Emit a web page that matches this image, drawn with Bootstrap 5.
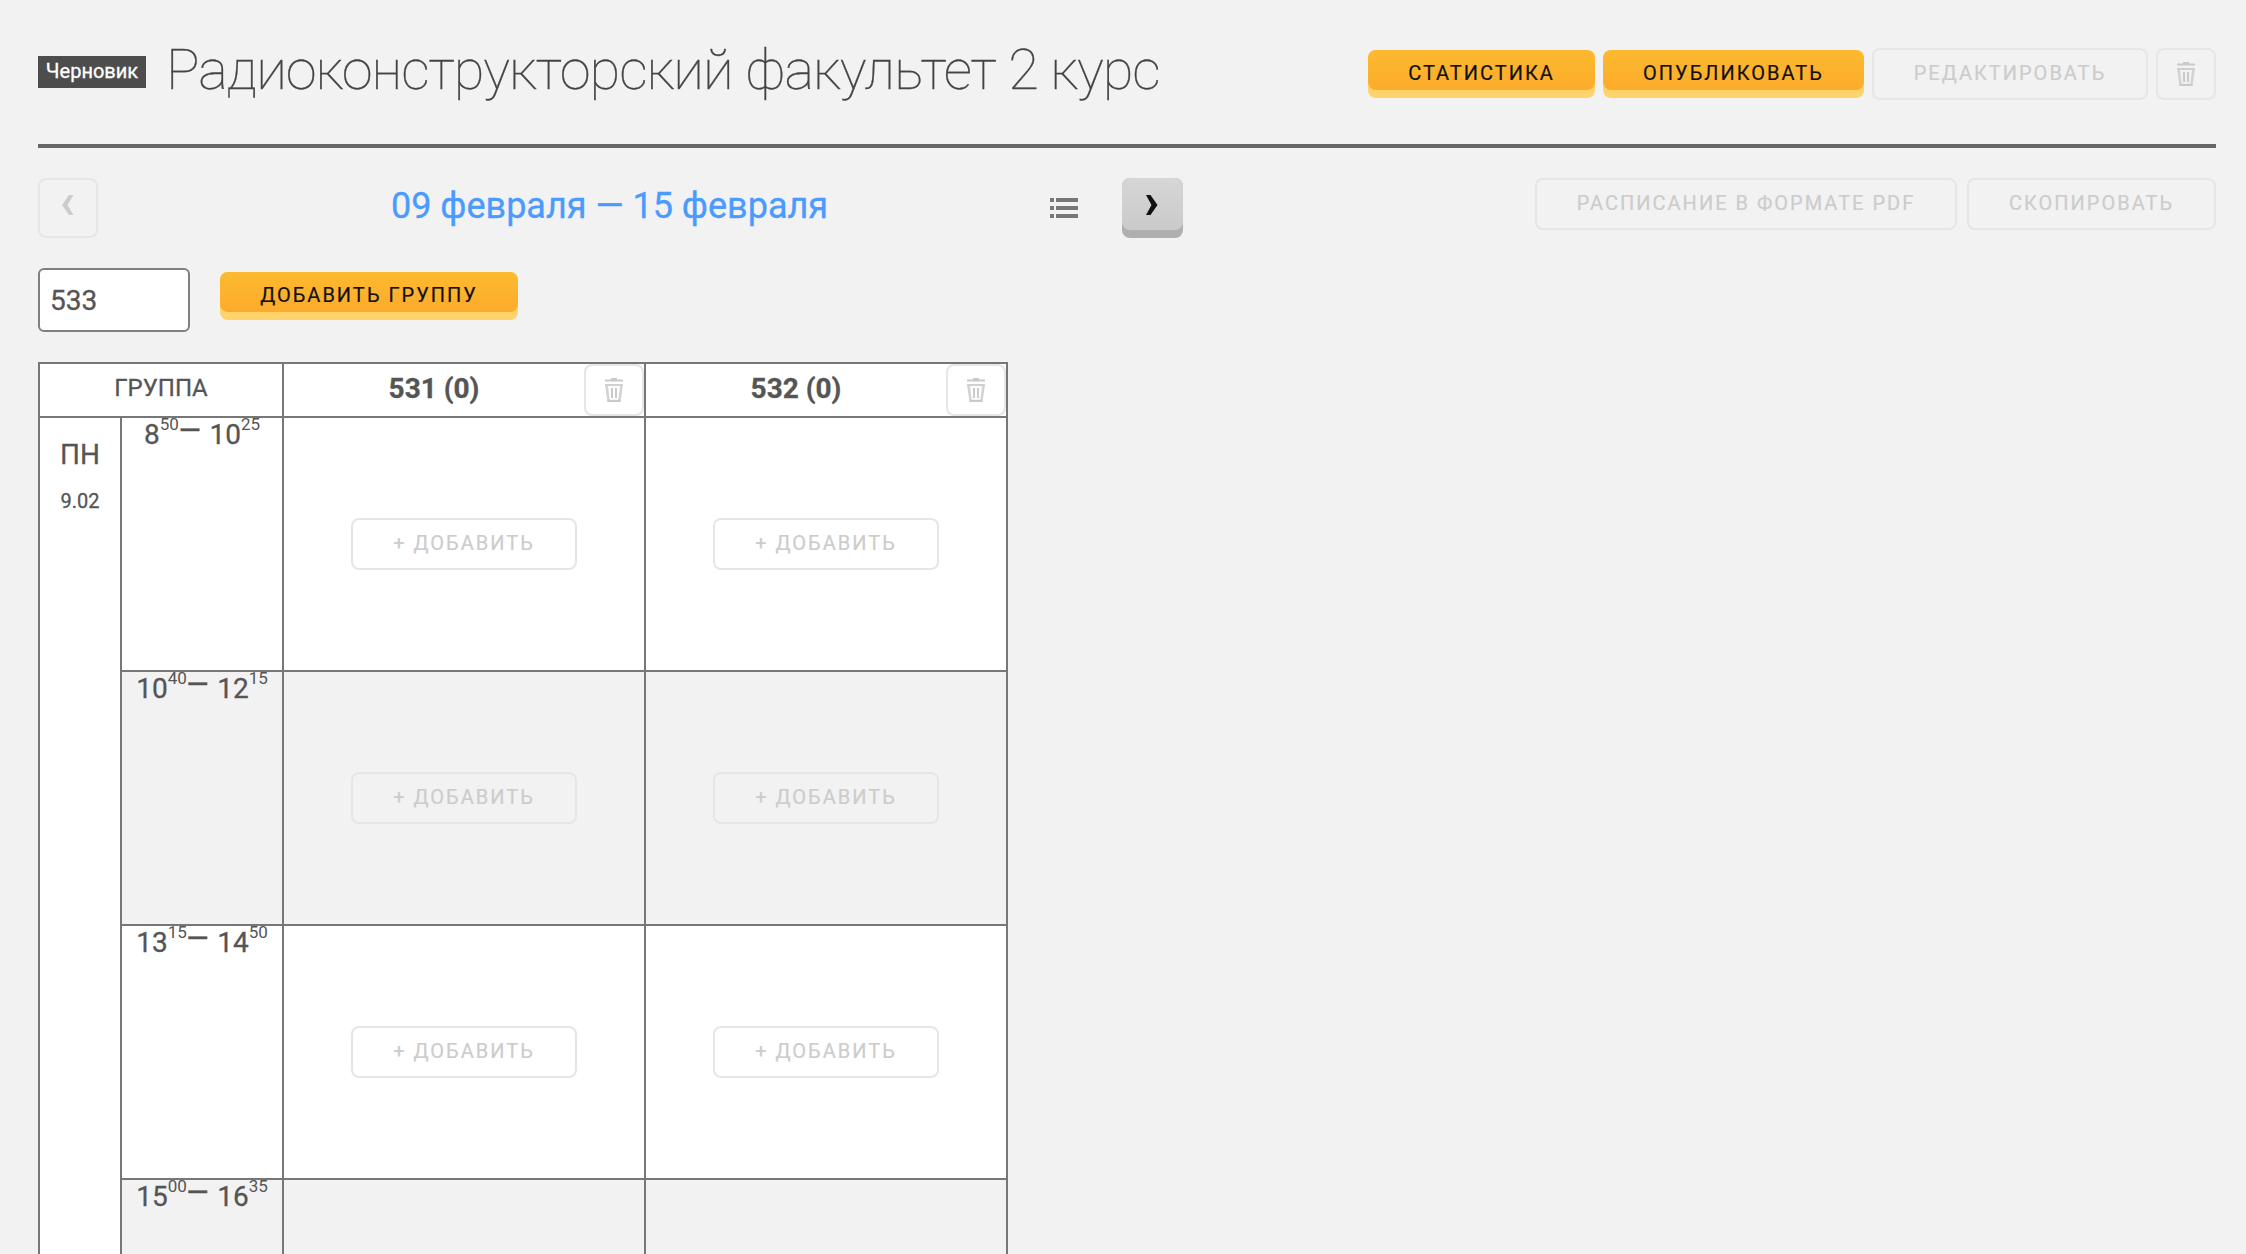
<!DOCTYPE html>
<html lang="ru">
<head>
<meta charset="utf-8">
<meta name="viewport" content="width=device-width, initial-scale=1">
<title>Радиоконструкторский факультет 2 курс</title>
<link href="https://cdn.jsdelivr.net/npm/bootstrap@5.3.0/dist/css/bootstrap.min.css" rel="stylesheet">
<style>
body{background:#f2f2f2;color:#555;font-family:Roboto,sans-serif;font-size:28px;line-height:40px}
.page{padding:0 30px 0 38px}
.head{height:148px;border-bottom:4px solid #666}
.draft{background:#4d4d4d;color:#fff;font-size:20px;line-height:30px;width:108px;height:32px;margin-top:56px;text-align:center;-webkit-text-stroke:.3px #fff}
.title{font-size:56px;font-weight:100;line-height:66px;letter-spacing:-1.03px;margin:37px 0 0 20px;color:#444;white-space:nowrap;-webkit-text-stroke:.3px #444}
.b{display:flex;justify-content:center;align-items:flex-start;border-radius:8px;font-size:20px;line-height:46px;letter-spacing:2px;padding:0;white-space:nowrap;flex:none;-webkit-text-stroke:.2px currentColor}
.b-main{height:48px;border:0;color:#111;background:#fdd36a}
.b-main>span,.b-next>span{display:block;width:100%;border-radius:8px;height:40px;background:linear-gradient(#fcba2f,#fcab2b)}
.b-line{height:52px;border:2px solid #e6e6e6;color:#ccc;background:transparent}
.b-icon{width:60px}
.b-icon svg{display:block;margin-top:12px}
.b-sq{width:60px;height:60px}
.b-sq svg{display:block;margin-top:15px}
.b-next{width:61px;background:#afafaf;border:0}
.b-next>span{height:52px;background:linear-gradient(#d6d6d6,#cacaca)}
.b-next svg{margin:17px auto 0 24px}
.w-stat{width:227px}.w-pub{width:261px}.w-edit{width:276px}.w-pdf{width:422px}.w-copy{width:249px}.w-group{width:298px}.w-add{width:226px}
.head-actions{margin-top:48px;gap:8px}
.week{width:1145px}
.week-date{color:#4a9aff;font-size:36px;line-height:56px;width:930px;padding:0 0 0 93px;text-align:center;-webkit-text-stroke:.3px #4a9aff}
.week-list{margin:20px 44px 0 auto}
.tools{padding-top:30px;height:120px}
.gap10{gap:10px}
.group-input{width:152px;height:64px;border:2px solid #808080;border-radius:6px;padding:0 10px;font-size:28px;color:#555;background:#fff;box-shadow:none;-webkit-text-stroke:.3px #555}
.group-form{height:94px;gap:30px}
.plan{width:970px;table-layout:fixed;border-collapse:separate;border-spacing:0;border-right:2px solid #777;line-height:34px;-webkit-text-stroke:.3px #555}
.plan th,.plan td{border:0 solid #777;border-top-width:2px;border-left-width:2px;padding:0;background:#fff;vertical-align:top;text-align:center}
.plan tr.alt td{background:#f2f2f2}
.plan thead th{height:54px}
.plan tbody td{height:254px}
.plan .corner{font-size:24px;font-weight:400;line-height:48px}
.grp{line-height:49px;font-weight:700}
.grp .name{width:300px;text-align:center}
.day{line-height:36px}
.day div{padding-top:19px}
.day small{display:block;font-size:20px;line-height:28px;margin-top:14px}
.time{white-space:nowrap}
.time sup{font-size:17px;line-height:0;top:-14px;vertical-align:baseline;-webkit-text-stroke:0}
.time .dash{position:relative;top:-4px;font-weight:500;letter-spacing:2px}
.slot .b{margin:100px auto 0}
</style>
<script src="https://cdn.jsdelivr.net/npm/bootstrap@5.3.0/dist/js/bootstrap.bundle.min.js"></script>
</head>
<body>
<svg class="d-none">
  <symbol id="trash" viewBox="0 0 18 24">
    <path fill="#c9c9c9" d="M6 0h6v1.500h6v2H0v-2h6z"/>
    <path fill="#d0d0d0" d="M0 6h18v2H0z"/>
    <path fill="none" stroke="#d3d3d3" stroke-width="2.600" d="M1.600 8 3.600 23h10.800l2-15"/>
    <path fill="#c9c9c9" d="M2.500 22h13v2h-13zM6 10h2v10H6zM10 10h2v10h-2z"/>
  </symbol>
</svg>
<main class="page vh-100 overflow-hidden">
  <header class="head d-flex align-items-start">
    <span class="draft flex-shrink-0">Черновик</span>
    <h1 class="title">Радиоконструкторский факультет 2 курс</h1>
    <div class="head-actions d-flex ms-auto">
      <div class="d-flex gap-2 align-items-center">
        <button class="b b-main w-stat"><span>СТАТИСТИКА</span></button>
        <button class="b b-main w-pub"><span>ОПУБЛИКОВАТЬ</span></button>
      </div>
      <button class="b b-line w-edit">РЕДАКТИРОВАТЬ</button>
      <button class="b b-line b-icon" aria-label="Удалить"><svg width="18" height="24"><use href="#trash"/></svg></button>
    </div>
  </header>

  <section class="tools d-flex align-items-start justify-content-between">
    <div class="week d-flex align-items-start">
      <button class="b b-line b-sq" aria-label="Назад"><svg width="12" height="20" viewBox="0 0 12 20"><path fill="#ccc" d="M7 0h4.500L5.500 10l6 10H7L0 10z"/></svg></button>
      <div class="week-date">09 февраля — 15 февраля</div>
      <svg class="week-list" width="28" height="22" viewBox="0 0 28 22" fill="#777"><path d="M0 0h4v4H0zM6 0h22v4H6zM0 8h4v4H0zM6 8h22v4H6zM0 16h4v4H0zM6 16h22v4H6z"/></svg>
      <button class="b b-sq b-next" aria-label="Вперёд"><span><svg width="12" height="20" viewBox="0 0 12 20"><path fill="#111" d="M4.500 0H0l5.500 10L0 20h4.500l7-10z"/></svg></span></button>
    </div>
    <div class="d-flex gap10">
      <button class="b b-line w-pdf">РАСПИСАНИЕ В ФОРМАТЕ PDF</button>
      <button class="b b-line w-copy">СКОПИРОВАТЬ</button>
    </div>
  </section>

  <form class="group-form d-flex align-items-start">
    <input class="group-input form-control" value="533" aria-label="Группа">
    <button type="button" class="b b-main w-group mt-1"><span>ДОБАВИТЬ ГРУППУ</span></button>
  </form>

  <table class="plan">
    <colgroup><col style="width:82px"><col style="width:162px"><col style="width:362px"><col style="width:362px"></colgroup>
    <thead>
      <tr>
        <th class="corner" colspan="2">ГРУППА</th>
        <th><div class="grp d-flex"><span class="name">531 (0)</span><button class="b b-line b-icon" aria-label="Удалить"><svg width="18" height="24"><use href="#trash"/></svg></button></div></th>
        <th><div class="grp d-flex"><span class="name">532 (0)</span><button class="b b-line b-icon" aria-label="Удалить"><svg width="18" height="24"><use href="#trash"/></svg></button></div></th>
      </tr>
    </thead>
    <tbody>
      <tr>
        <td class="day" rowspan="4"><div>ПН</div><small>9.02</small></td>
        <td class="time">8<sup>50</sup><span class="dash">—</span> 10<sup>25</sup></td>
        <td class="slot"><button class="b b-line w-add">+ ДОБАВИТЬ</button></td>
        <td class="slot"><button class="b b-line w-add">+ ДОБАВИТЬ</button></td>
      </tr>
      <tr class="alt">
        <td class="time">10<sup>40</sup><span class="dash">—</span> 12<sup>15</sup></td>
        <td class="slot"><button class="b b-line w-add">+ ДОБАВИТЬ</button></td>
        <td class="slot"><button class="b b-line w-add">+ ДОБАВИТЬ</button></td>
      </tr>
      <tr>
        <td class="time">13<sup>15</sup><span class="dash">—</span> 14<sup>50</sup></td>
        <td class="slot"><button class="b b-line w-add">+ ДОБАВИТЬ</button></td>
        <td class="slot"><button class="b b-line w-add">+ ДОБАВИТЬ</button></td>
      </tr>
      <tr class="alt">
        <td class="time">15<sup>00</sup><span class="dash">—</span> 16<sup>35</sup></td>
        <td class="slot"></td>
        <td class="slot"></td>
      </tr>
    </tbody>
  </table>
</main>
</body>
</html>
